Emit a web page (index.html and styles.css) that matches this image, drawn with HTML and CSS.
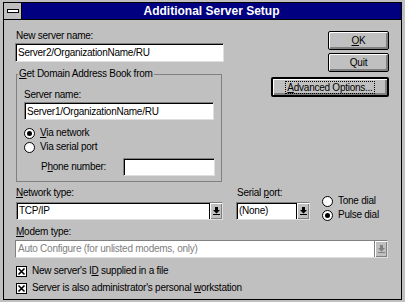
FILE: index.html
```html
<!DOCTYPE html>
<html lang="en">
<head>
    <meta charset="UTF-8">
    <title>Additional Server Setup</title>
    <link rel="stylesheet" href="styles.css">
</head>
<body>
    <div class="window">
        <div class="titlebar">
            <div class="sysmenu"><span class="dash"></span></div>
            <div class="title">Additional Server Setup</div>
        </div>

        <div class="content">
            <div class="top">
                <div class="left-col">
                    <div class="label">New server name:</div>
                    <input type="text" class="field wide" value="Server2/OrganizationName/RU">

                    <fieldset class="group">
                        <legend><u>G</u>et Domain Address Book from</legend>
                        <div class="label">Server name:</div>
                        <input type="text" class="field group-field" value="Server1/OrganizationName/RU">

                        <div class="radio-row first"><span class="radio checked"></span><span><u>V</u>ia network</span></div>
                        <div class="radio-row"><span class="radio"></span><span>Via serial port</span></div>

                        <div class="phone-row">
                            <span class="phone-label">P<u>h</u>one number:</span>
                            <input type="text" class="field phone-field" value="">
                        </div>
                    </fieldset>
                </div>

                <div class="right-col">
                    <button class="btn ok"><u>O</u>K</button>
                    <button class="btn quit">Quit</button>
                    <button class="btn default advanced"><span class="focus"><u>A</u>dvanced Options...</span></button>
                </div>
            </div>

            <div class="net-row">
                <div class="net-col">
                    <div class="label"><u>N</u>etwork type:</div>
                    <div class="combo">
                        <span class="combo-text">TCP/IP</span>
                        <span class="combo-btn"><svg width="7" height="8" viewBox="0 0 7 8"><path d="M2 0h3v3h2L3.5 6.5 0 3h2z M0 7h7v1H0z"/></svg></span>
                    </div>
                </div>
                <div class="serial-col">
                    <div class="label indent">Serial <u>p</u>ort:</div>
                    <div class="combo">
                        <span class="combo-text">(None)</span>
                        <span class="combo-btn"><svg width="7" height="8" viewBox="0 0 7 8"><path d="M2 0h3v3h2L3.5 6.5 0 3h2z M0 7h7v1H0z"/></svg></span>
                    </div>
                </div>
                <div class="dial-col">
                    <div class="radio-row"><span class="radio"></span><span>Tone dial</span></div>
                    <div class="radio-row"><span class="radio checked"></span><span>Pulse dial</span></div>
                </div>
            </div>

            <div class="label modem-label"><u>M</u>odem type:</div>
            <div class="combo disabled modem">
                <span class="combo-text">Auto Configure (for unlisted modems, only)</span>
                <span class="combo-btn"><svg width="7" height="8" viewBox="0 0 7 8"><path d="M2 0h3v3h2L3.5 6.5 0 3h2z M0 7h7v1H0z"/></svg></span>
            </div>

            <div class="check-row first">
                <svg class="check" width="11" height="11" viewBox="0 0 11 11"><rect x="0.5" y="0.5" width="10" height="10" fill="#fff" stroke="#000"/><path d="M2.5 2.5l6 6M8.5 2.5l-6 6" stroke="#000" stroke-width="1.6"/></svg>
                <span>New server's I<u>D</u> supplied in a file</span>
            </div>
            <div class="check-row">
                <svg class="check" width="11" height="11" viewBox="0 0 11 11"><rect x="0.5" y="0.5" width="10" height="10" fill="#fff" stroke="#000"/><path d="M2.5 2.5l6 6M8.5 2.5l-6 6" stroke="#000" stroke-width="1.6"/></svg>
                <span>Server is also administrator's personal <u>w</u>orkstation</span>
            </div>
        </div>
    </div>
</body>
</html>
```

FILE: styles.css
```css
body {
    margin: 0;
    width: 405px;
    height: 302px;
    overflow: hidden;
    background-color: #c0c0c0;
    font-family: 'Liberation Sans', Arial, sans-serif;
    font-size: 10px;
    line-height: 12px;
    letter-spacing: -0.25px;
    color: #000;
}

.window {
    margin: 2px 0 0 3px;
    width: 399px;
    height: 298px;
    border: 1px solid #000;
    box-sizing: border-box;
}

/* title bar */
.titlebar {
    display: flex;
    height: 16px;
    background-color: #000080;
    border-bottom: 1px solid #000;
}

.sysmenu {
    width: 18px;
    height: 16px;
    background-color: #c0c0c0;
    border-right: 1px solid #000;
    box-sizing: border-box;
    display: flex;
    justify-content: center;
    align-items: center;
}

.dash {
    width: 10px;
    height: 2px;
    background-color: #fff;
    border: 1px solid #000;
}

.title {
    flex: 1;
    text-align: center;
    color: #fff;
    font-weight: 700;
    font-size: 12px;
    line-height: 16px;
    letter-spacing: 0;
}

/* dialog body */
.content {
    padding: 10px 12px 0 11px;
}

.top {
    display: flex;
    justify-content: space-between;
}

.left-col {
    width: 209px;
}

.label {
    height: 12px;
    white-space: nowrap;
}

.left-col > .label {
    padding-left: 1px;
}

.field {
    display: block;
    height: 18px;
    padding: 0 2px;
    margin: 1px 0 0 0;
    box-sizing: border-box;
    background-color: #fff;
    border: 1px solid;
    border-color: #808080 #dfdfdf #dfdfdf #808080;
    box-shadow: inset 1px 1px 0 #000;
    font-family: inherit;
    font-size: 10px;
    letter-spacing: -0.25px;
    color: #000;
    outline: none;
}

.wide {
    width: 209px;
    height: 19px;
}

.group {
    margin: 6px 0 0 1px;
    width: 206px;
    min-width: 0;
    box-sizing: border-box;
    padding: 9px 0 5px 7px;
    border: 1px solid #808080;
}

.group legend {
    padding: 0 1px;
    margin-left: -6px;
    line-height: 12px;
}

.group-field {
    width: 190px;
}

.radio-row {
    display: flex;
    align-items: center;
    height: 14px;
    gap: 5px;
    white-space: nowrap;
}

.radio-row.first {
    margin-top: 6px;
}

.radio {
    width: 11px;
    height: 11px;
    border-radius: 50%;
    border: 1px solid #000;
    background-color: #fff;
    box-sizing: border-box;
    display: flex;
    justify-content: center;
    align-items: center;
}

.radio.checked::after {
    content: '';
    width: 5px;
    height: 5px;
    border-radius: 50%;
    background-color: #000;
}

.phone-row {
    display: flex;
    align-items: center;
    margin-top: 4px;
    padding-left: 17px;
}

.phone-label {
    width: 82px;
}

.phone-field {
    width: 92px;
    margin: 0;
}

/* buttons */
.right-col {
    display: flex;
    flex-direction: column;
    align-items: flex-end;
}

.btn {
    display: flex;
    justify-content: center;
    align-items: center;
    padding: 0;
    background-color: #c0c0c0;
    border: 1px solid #000;
    border-radius: 2px;
    box-shadow: inset 1px 1px 0 #fff, inset -2px -2px 0 #808080;
    font-family: inherit;
    font-size: 10px;
    letter-spacing: -0.25px;
    color: #000;
    box-sizing: border-box;
}

.ok {
    width: 61px;
    height: 19px;
    margin-top: 1px;
}

.quit {
    width: 61px;
    height: 19px;
    margin-top: 3px;
}

.advanced {
    width: 118px;
    height: 20px;
    margin-top: 5px;
}

.btn.default {
    border-width: 2px;
}

.focus {
    outline: 1px dotted #000;
    padding: 0 1px;
    line-height: 11px;
}

/* network row */
.net-row {
    display: flex;
    margin-top: 5px;
}

.net-col {
    width: 207px;
    margin-left: 1px;
}

.serial-col {
    width: 74px;
    margin-left: 13px;
}

.indent {
    padding-left: 1px;
}

.dial-col {
    margin: 7px 0 0 12px;
}

.combo {
    display: flex;
    height: 18px;
    margin-top: 3px;
    box-sizing: border-box;
    background-color: #fff;
    border: 1px solid;
    border-color: #808080 #dfdfdf #dfdfdf #808080;
    box-shadow: inset 1px 1px 0 #000;
}

.combo-text {
    flex: 1;
    padding-left: 2px;
    line-height: 16px;
    white-space: nowrap;
    overflow: hidden;
}

.combo-btn {
    width: 12px;
    background-color: #c0c0c0;
    border-left: 1px solid #000;
    box-shadow: inset 1px 1px 0 #fff, inset -1px -1px 0 #808080;
    display: flex;
    justify-content: center;
    align-items: center;
}

.combo-btn svg {
    fill: #000;
}

.modem-label {
    margin-top: 4px;
    padding-left: 1px;
}

.modem {
    width: 373px;
    margin-top: 2px;
}

.combo.disabled {
    box-shadow: none;
    border-color: #808080 #dfdfdf #dfdfdf #808080;
}

.combo.disabled .combo-text {
    color: #808080;
}

.combo.disabled .combo-btn {
    border-left-color: #808080;
}

.combo.disabled .combo-btn svg {
    fill: #808080;
}

/* check boxes */
.check-row {
    display: flex;
    align-items: center;
    gap: 5px;
    height: 14px;
    margin-top: 3px;
    padding-left: 1px;
    white-space: nowrap;
}

.check-row.first {
    margin-top: 6px;
}
```
